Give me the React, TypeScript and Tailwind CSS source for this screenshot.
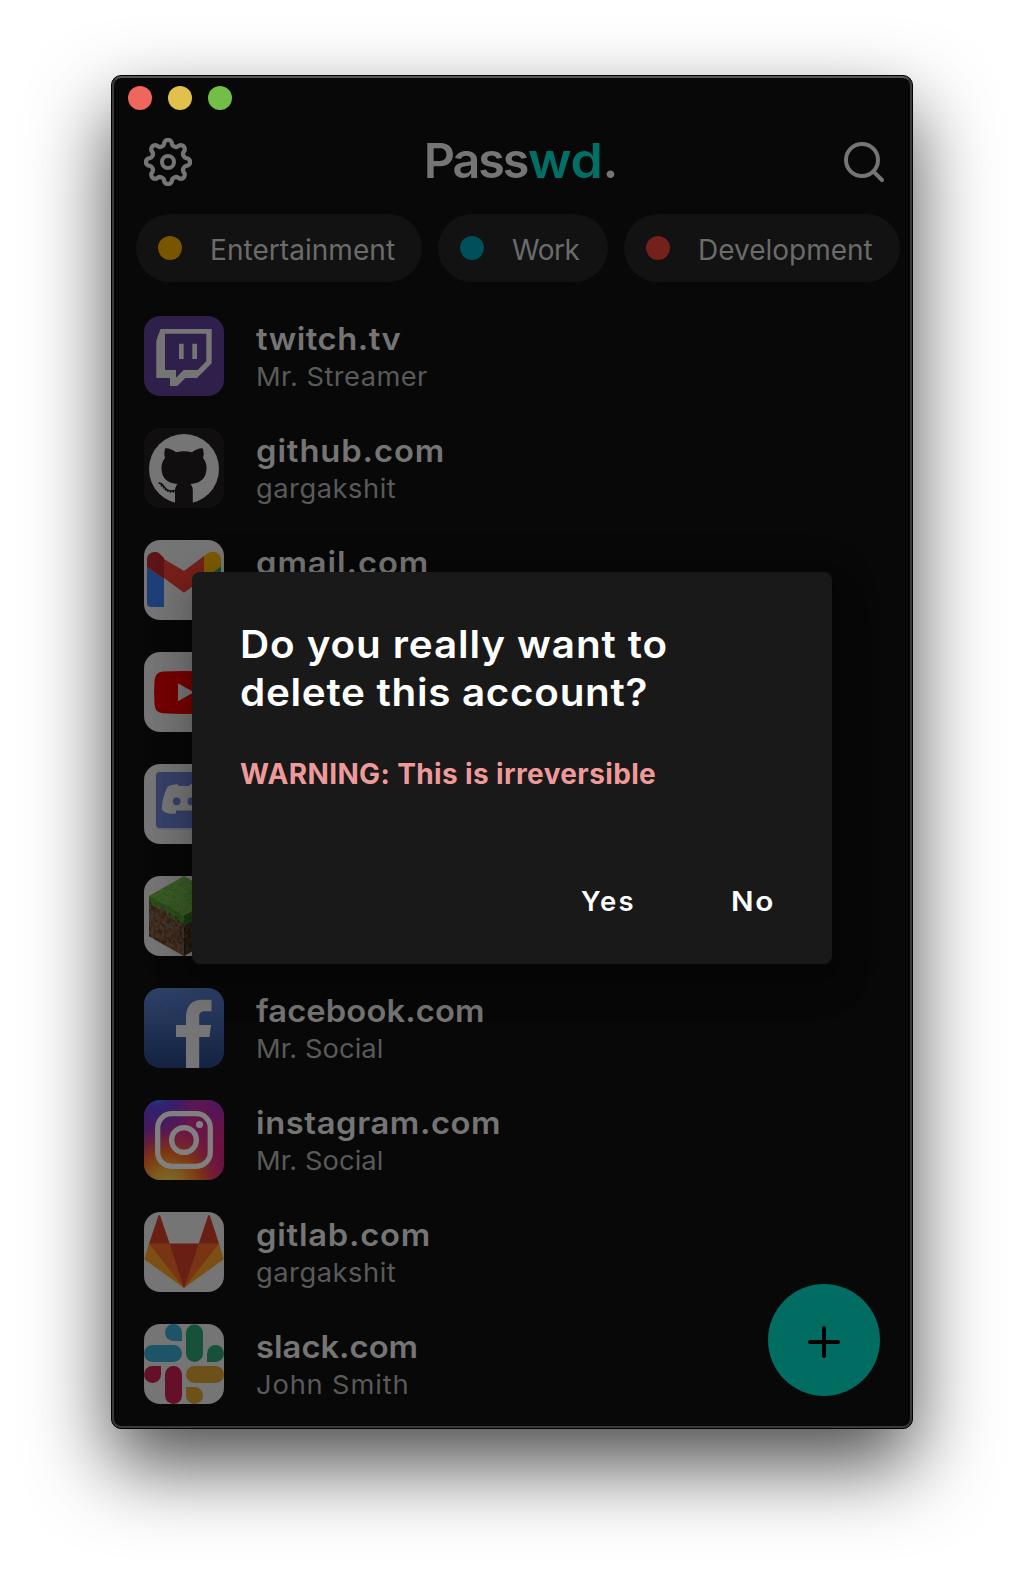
import type { ReactNode } from 'react';
import { FiPlus, FiSearch } from 'react-icons/fi';

const Tile = ({ bg, children }: { bg: string; children: ReactNode }) => (
  <svg viewBox="0 0 80 80" className="h-20 w-20 shrink-0 rounded-2xl" style={{ background: bg }}>
    {children}
  </svg>
);

/* The cog outline repeats one rounded lobe eight times around the centre. */
const cogPath = (() => {
  const at = (x: number, y: number, turn: number) => {
    const a = (turn * Math.PI) / 4;
    const px = x * Math.cos(a) - y * Math.sin(a);
    const py = x * Math.sin(a) + y * Math.cos(a);
    return `${px.toFixed(2)} ${py.toFixed(2)}`;
  };
  let d = `M${at(-6.4, -15.4, 0)}`;
  for (let i = 0; i < 8; i++) {
    d += `C${at(-4.8, -16.1, i)} ${at(-4.1, -17, i)} ${at(-3.9, -18.2, i)}`;
    d += `A3.900 3.900 0 0 1 ${at(3.9, -18.2, i)}`;
    d += `C${at(4.1, -17, i)} ${at(4.8, -16.1, i)} ${at(6.4, -15.4, i)}`;
  }
  return `${d}Z`;
})();

const Cog = () => (
  <svg viewBox="-24 -24 48 48" className="h-12 w-12" fill="none" stroke="currentColor" strokeWidth="4" strokeLinejoin="round">
    <path d={cogPath} strokeWidth="4.300" />
    <circle r="6" />
  </svg>
);

const Twitch = () => (
  <Tile bg="#2e1f4b">
    <path
      fill="#757575"
      fillRule="evenodd"
      d="M16.5 13H67.7V47.3L53 62H41.3L33.3 70H26V62H12.3V24.5ZM21 17.7V54H32V61.7L39.7 54H53.7L62.3 45.3V17.7ZM35 27.7H39.7V43H35ZM48.3 27.7H53V43H48.3Z"
    />
  </Tile>
);

const GitHub = () => (
  <Tile bg="#110e10">
    <circle cx="40" cy="41" r="35" fill="#757575" />
    <path
      fill="#110e10"
      d="M21.3 20.3C25 20 29 22 32 24.2C37 22.8 43 22.8 48 24.2C51 22 55 20 58.7 20.3C60 24 60 27 59 30C61.500 33 62.500 36 62.500 40C62.500 51 56 55 46.500 56C48.200 58 48.800 60 48.800 63V76.500H31V63C31 60 31.800 58 33.500 56C24 55 17.500 51 17.500 40C17.500 36 18.500 33 21 30C20 27 20 24 21.300 20.300Z"
    />
    <path d="M14.500 55C18.500 55 19.500 58 21.500 60.500C23.500 63 27 63.500 31.500 62.500" fill="none" stroke="#110e10" strokeWidth="1.600" />
    <path d="M17 57.500C20 58.500 20 61 22.500 62.500C25 64 28 64 31 63.500" fill="none" stroke="#110e10" strokeWidth="2" strokeDasharray="1.300 1.500" />
  </Tile>
);

const Gmail = () => (
  <Tile bg="#757575">
    <path fill="#1f3f79" d="M3 27L20 39V67H7Q3 67 3 63Z" />
    <path fill="#184e29" d="M77 26L60 39V67H73Q77 67 77 63Z" />
    <path fill="#76201a" d="M20 19L40 31L60 16V38L40 52.700L20 38Z" />
    <path fill="#5e1416" d="M3 27V20C3 13 10 10 15.500 13.500L20 18V39Z" />
    <path fill="#7c5a00" d="M77 26V20C77 13 70 10 64.500 13L60 16V38.500Z" />
  </Tile>
);

const YouTube = () => (
  <Tile bg="#757575">
    <path fill="#750000" d="M19 19.500Q40 18.500 61 19.500Q69 20 69.500 29Q70.300 40 69.500 52Q69 61 61 61.300Q40 62.500 19 61.300Q11 61 10.500 52Q9.700 40 10.500 29Q11 20 19 19.500Z" />
    <path fill="#757575" d="M34 31.300V49.300L50 40.300Z" />
  </Tile>
);

const Discord = () => (
  <Tile bg="#757575">
    <rect x="12" y="9" width="56" height="57" rx="4" fill="#656a77" />
    <rect x="12" y="8" width="56" height="56" rx="4" fill="#364069" />
    <path
      fill="#757575"
      d="M23.500 23Q27 20.300 33.500 20.300L35 22H45L46.500 20.300Q53 20.300 56.500 23Q62 33 62.300 45.500Q58 50 50 50L48 46.500H32L32 49.500Q22 51 17.700 45.500Q18 33 23.500 23Z"
    />
    <circle cx="32.700" cy="37.300" r="3.900" fill="#364069" />
    <circle cx="47.300" cy="37.300" r="3.900" fill="#364069" />
  </Tile>
);

/* One 16 x 16 block texture; the hash keeps the speckle pattern stable. */
const noise = (x: number, y: number, seed: number) => {
  const v = Math.sin(x * 12.9898 + y * 78.233 + seed * 37.719) * 43758.5453;
  return v - Math.floor(v);
};
const Face = ({ matrix, colors, grass, seed }: { matrix: string; colors: string[]; grass?: string[]; seed: number }) => (
  <g transform={matrix}>
    <rect width="16" height="16" fill={colors[0]} />
    {Array.from({ length: 256 }, (_, i) => {
      const x = i % 16;
      const y = Math.floor(i / 16);
      const n = noise(x, y, seed);
      const isGrass = grass && y < 2 + Math.floor(noise(x, 3, seed) * 3);
      const set = isGrass ? grass : colors;
      return <rect key={i} x={x} y={y} width="1.05" height="1.05" fill={set[Math.floor(n * set.length)]} />;
    })}
  </g>
);

const Minecraft = () => (
  <Tile bg="#757575">
    <Face matrix="matrix(2.1875 1.2375 -2.1875 1.2375 40 0.3)" colors={['#375824', '#3a5c27', '#3f602a', '#345421', '#3b5d27']} seed={1} />
    <Face
      matrix="matrix(2.1875 1.2375 0 2.5 5 20.1)"
      colors={['#3d2a1c', '#483322', '#2f2016', '#4d3828', '#38271b', '#3d2b1e', '#42301f', '#3a3838']}
      grass={['#28501a', '#2f581d', '#2a4a18']}
      seed={2}
    />
    <Face
      matrix="matrix(2.1875 -1.2375 0 2.5 40 39.9)"
      colors={['#241911', '#2d2017', '#1c130d', '#302319']}
      grass={['#1c3a12', '#214214']}
      seed={5}
    />
  </Tile>
);

const Facebook = () => (
  <svg viewBox="0 0 80 80" className="h-20 w-20 shrink-0 rounded-2xl">
    <defs>
      <linearGradient id="fb" x1="0" y1="0" x2="0" y2="1">
        <stop offset="0" stopColor="#2e4168" />
        <stop offset="1" stopColor="#132240" />
      </linearGradient>
    </defs>
    <rect width="80" height="80" fill="url(#fb)" />
    <path fill="#757575" d="M42 80V49H32V37H42V29C42 18 48 11.700 58 11.700H67.500V23.300H61C57 23.300 55.200 25 55.200 29V37H67L65.500 49H55.200V80Z" />
  </svg>
);

const Instagram = () => (
  <svg viewBox="0 0 80 80" className="h-20 w-20 shrink-0 rounded-2xl">
    <defs>
      <linearGradient id="ig-base" x1="0" y1="0.2" x2="1" y2="0.6">
        <stop offset="0" stopColor="#41185e" />
        <stop offset="0.5" stopColor="#6b1648" />
        <stop offset="1" stopColor="#6c1241" />
      </linearGradient>
      <radialGradient id="ig-warm" cx="0.3" cy="1.05" r="0.75">
        <stop offset="0" stopColor="#80682d" />
        <stop offset="0.250" stopColor="#7d5a1e" />
        <stop offset="0.550" stopColor="#7c3412" />
        <stop offset="1" stopColor="#701a3a" stopOpacity="0" />
      </radialGradient>
      <radialGradient id="ig-blue" cx="0.150" cy="-0.1" r="0.600">
        <stop offset="0" stopColor="#203a80" />
        <stop offset="0.400" stopColor="#33206e" />
        <stop offset="1" stopColor="#45185f" stopOpacity="0" />
      </radialGradient>
      <radialGradient id="ig-violet" cx="0.950" cy="0" r="0.500">
        <stop offset="0" stopColor="#471566" />
        <stop offset="1" stopColor="#5c1650" stopOpacity="0" />
      </radialGradient>
    </defs>
    <rect width="80" height="80" fill="url(#ig-base)" />
    <rect width="80" height="80" fill="url(#ig-warm)" />
    <rect width="80" height="80" fill="url(#ig-violet)" />
    <rect width="80" height="80" fill="url(#ig-blue)" />
    <g fill="none" stroke="#808080" strokeWidth="5.300">
      <rect x="13.700" y="13.700" width="52.600" height="52.600" rx="14" />
      <circle cx="40" cy="40" r="12.400" />
    </g>
    <circle cx="55.500" cy="24.500" r="3.500" fill="#808080" />
  </svg>
);

const GitLab = () => (
  <Tile bg="#757575">
    <path fill="#7c5014" d="M5 31.700L0.300 47.300L40 76L79.700 47.300L75 31.700Z" />
    <path fill="#783413" d="M5 31.700H75L40 76Z" />
    <path fill="#6a1f15" d="M25.700 31.700H54.700L40 76ZM5 31.700L14.300 4Q15.300 2 16.300 4L25.700 31.700ZM54.700 31.700L64 4Q65 2 66 4L75 31.700Z" />
  </Tile>
);

const Slack = () => (
  <Tile bg="#757575">
    <path fill="#1d5468" d="M38 17H29.500A8.500 8.500 0 1 1 38 8.500ZM8.500 21H29.500A8.500 8.500 0 0 1 29.500 38H8.500A8.500 8.500 0 0 1 8.500 21Z" />
    <path fill="#165239" d="M42 9A8.500 8.500 0 0 1 59 9V29.500A8.500 8.500 0 0 1 42 29.500ZM63 38V29.500A8.500 8.500 0 1 1 71.500 38Z" />
    <path fill="#650f29" d="M17 42V50.500A8.500 8.500 0 1 1 8.500 42ZM21 50.500A8.500 8.500 0 0 1 38 50.500V71.500A8.500 8.500 0 0 1 21 71.500Z" />
    <path fill="#6d5118" d="M50.500 42H71.500A8.500 8.500 0 0 1 71.500 59H50.500A8.500 8.500 0 0 1 50.500 42ZM42 63H50.500A8.500 8.500 0 1 1 42 71.500Z" />
  </Tile>
);

const chips = [
  { label: 'Entertainment', dot: 'bg-[#7a5500]', width: 'w-[286px]', track: 'tracking-[0.05px]' },
  { label: 'Work', dot: 'bg-[#00505b]', width: 'w-[170px]', track: 'tracking-[-0.5px]' },
  { label: 'Development', dot: 'bg-[#75211b]', width: 'w-[276px]', track: 'tracking-normal' },
];

const accounts = [
  { site: 'twitch.tv', siteTrack: 'tracking-[0.5px]', user: 'Mr. Streamer', userTrack: 'tracking-[0.41px]', Icon: Twitch },
  { site: 'github.com', siteTrack: 'tracking-[0.86px]', user: 'gargakshit', userTrack: 'tracking-[0.5px]', Icon: GitHub },
  { site: 'gmail.com', siteTrack: 'tracking-[0.88px]', Icon: Gmail },
  { Icon: YouTube },
  { Icon: Discord },
  { Icon: Minecraft },
  { site: 'facebook.com', siteTrack: 'tracking-[0.1px]', user: 'Mr. Social', userTrack: 'tracking-[0.06px]', Icon: Facebook },
  { site: 'instagram.com', siteTrack: 'tracking-[0.56px]', user: 'Mr. Social', userTrack: 'tracking-[0.06px]', Icon: Instagram },
  { site: 'gitlab.com', siteTrack: 'tracking-[0.72px]', user: 'gargakshit', userTrack: 'tracking-[0.5px]', Icon: GitLab },
  { site: 'slack.com', siteTrack: 'tracking-normal', user: 'John Smith', userTrack: 'tracking-[0.8px]', Icon: Slack },
];

export default function App() {
  return (
    <main className="min-h-[1576px] overflow-hidden bg-white pl-[111px] pt-[75px] font-['Inter',sans-serif]">
      <div className="h-[1354px] w-[802px] rounded-[10px] border border-black bg-[#080808] shadow-[0_36px_80px_rgba(0,0,0,0.7)]">
        <div className="relative h-full overflow-hidden rounded-[9px] border-2 border-[#3a3a3a] border-t-[#565656]">
          <div className="flex gap-4 pl-3.5 pt-2">
            <span className="h-6 w-6 rounded-full bg-[#ee665c]" />
            <span className="h-6 w-6 rounded-full bg-[#e1c04c]" />
            <span className="h-6 w-6 rounded-full bg-[#72be47]" />
          </div>
          <header className="mt-7 flex h-12 items-center justify-between pl-[30px] pr-[22px] text-[#757575]">
            <Cog />
            <h1 className="flex pb-[3px] pl-[10px] text-[48.5px] font-semibold leading-[48px]">
              <span className="w-[104px] tracking-[-2.1px]">Pass</span>
              <span className="w-[75px] origin-left scale-x-[1.07] tracking-[-0.3px] text-[#007066]">wd</span>
              <span>.</span>
            </h1>
            <FiSearch className="h-12 w-12" />
          </header>
          <nav className="mt-7 flex gap-4 pl-[22px]">
            {chips.map((c) => (
              <div key={c.label} className={`flex h-[68px] shrink-0 items-center rounded-full bg-[#121212] pl-[22px] ${c.width}`}>
                <span className={`h-6 w-6 rounded-full ${c.dot}`} />
                <span className={`ml-7 pt-1 text-[28px] leading-8 text-[#6b6b6b] ${c.track}`}>{c.label}</span>
              </div>
            ))}
          </nav>
          <ul className="mt-[34px] flex flex-col gap-8 pl-[30px]">
            {accounts.map(({ site, siteTrack, user, userTrack, Icon }, i) => (
              <li key={i} className="flex h-20 gap-8">
                <Icon />
                <div className="pt-[3px]">
                  {site && (
                    <div className={`origin-left scale-x-[1.04] text-[31.5px] font-semibold leading-[40px] text-[#757575] ${siteTrack}`}>{site}</div>
                  )}
                  {user && (
                    <div className={`mt-0.5 origin-left scale-x-[1.05] text-[26px] leading-8 text-[#5a5a5a] ${userTrack}`}>{user}</div>
                  )}
                </div>
              </li>
            ))}
          </ul>
          <button className="absolute bottom-[30px] right-[30px] flex h-28 w-28 items-center justify-center rounded-full bg-[#016c62] pt-1 text-black">
            <FiPlus className="h-12 w-12" />
          </button>
          <section className="absolute left-[78px] top-[494px] h-[392px] w-[640px] rounded-lg bg-[#191919] px-12 pt-12 shadow-[0_11px_15px_-7px_rgba(0,0,0,0.2),0_24px_38px_3px_rgba(0,0,0,0.14),0_9px_46px_8px_rgba(0,0,0,0.12)]">
            <h2 className="origin-left scale-x-[1.05] whitespace-nowrap text-[38.5px] font-semibold leading-[48px] text-white">
              <span className="tracking-[0.84px]">Do you really want to</span>
              <br />
              <span className="tracking-[0.66px]">delete this account?</span>
            </h2>
            <p className="mt-10 whitespace-nowrap text-[28px] font-[650] leading-9 tracking-[0.37px] text-[#ef9a9a]">WARNING: This is irreversible</p>
            <div className="mt-[91px] flex justify-end pr-[9px] text-[27.5px] font-semibold leading-9 text-white">
              <button className="w-[150px] text-left tracking-[2.2px]">Yes</button>
              <button className="w-[44px] origin-left scale-x-[1.08] text-left tracking-[1.6px]">No</button>
            </div>
          </section>
        </div>
      </div>
    </main>
  );
}
